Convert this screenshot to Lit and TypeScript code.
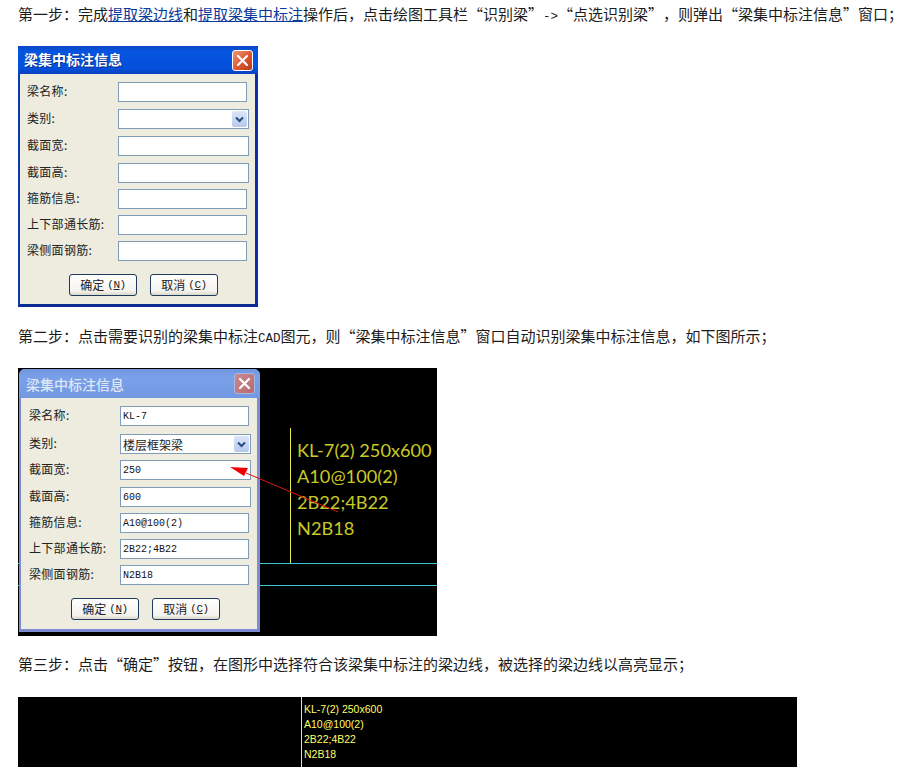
import { LitElement, html, css, svg } from "lit";
import { customElement, property } from "lit/decorators.js";

const LABELS = ["梁名称:", "类别:", "截面宽:", "截面高:", "箍筋信息:", "上下部通长筋:", "梁侧面钢筋:"];
const WIDTHS = [129, 131, 131, 131, 129, 129, 129];

@customElement("beam-dialog")
class BeamDialog extends LitElement {
  @property({ type: Array }) values: string[] = ["", "", "", "", "", "", ""];
  @property({ type: Array }) gaps: number[] = [0, 7, 7, 7, 6, 6, 6];
  @property({ type: Boolean, reflect: true }) faded = false;

  static styles = css`
    :host { display: block; width: 240px; box-sizing: border-box; background: #edecdf; border: solid #0a3ab8; border-width: 0 3px 3px 2px; border-right-color: #0a2ea8; border-bottom-color: #0a2a94; font-family: "Noto Sans CJK SC", sans-serif; color: #222; }
    :host([faded]) { width: 241px; border-color: #7c8bd2; border-radius: 6px 6px 0 0; }
    .title { height: 26px; margin: 0 -3px 0 -2px; padding: 0 5px 2px 6px; display: flex; align-items: center; justify-content: space-between; background: linear-gradient(#0a48c4, #0654e0 20%, #0450dc 80%, #0a40bc); color: #fff; font-size: 14px; font-weight: 700; text-shadow: 1px 1px 0 #0a2f8f; border-radius: 2px 2px 0 0; }
    :host([faded]) .title { height: 29px; padding-bottom: 0; background: linear-gradient(#7096dc, #7ba0ea 30%, #7398e2); border-radius: 6px 6px 0 0; text-shadow: none; color: #dfe7f7; font-weight: 500; padding-left: 7px; }
    .close { width: 21px; height: 21px; box-sizing: border-box; margin-top: 2px; border: 1px solid #fff; border-radius: 3px; background: linear-gradient(135deg, #ec9a78, #dc5530 55%, #b8391c); display: flex; align-items: center; justify-content: center; }
    :host([faded]) .close { margin-top: 0; background: linear-gradient(135deg, #c88a90, #b86a70); border-color: #a8b8e0; }
    .rows { padding: 8px 0 0 7px; }
    :host([faded]) .rows { padding-left: 8px; }
    .row { display: flex; align-items: flex-start; height: 20px; }
    .label { width: 91px; flex: none; font-size: 12px; letter-spacing: 0.3px; line-height: 18px; white-space: nowrap; }
    .field { box-sizing: border-box; height: 20px; background: #fff; border: 1px solid #7f9db9; display: flex; align-items: center; justify-content: space-between; padding: 0 1px 0 2px; font-size: 12px; overflow: hidden; white-space: nowrap; }
    .mono { font-family: "Liberation Mono", monospace; font-size: 10px; color: #111; }
    .drop { width: 15px; height: 16px; background: linear-gradient(#dbe6f8, #b6c9ec); border-radius: 2px; display: flex; align-items: center; justify-content: center; }
    .buttons { display: flex; gap: 13px; padding: 13px 0 8px 49px; }
    :host([faded]) .buttons { padding: 13px 0 9px 50px; }
    .btn { width: 68px; height: 22px; box-sizing: border-box; border: 1px solid #1f3a5f; border-radius: 3px; background: linear-gradient(#fff, #f4f3ee 80%, #dcd8c8); font-size: 12px; line-height: 18px; padding-bottom: 1px; display: flex; align-items: center; justify-content: center; gap: 3px; }
    .btn .key { font-family: "Liberation Mono", monospace; font-size: 11px; letter-spacing: -0.5px; }
  `;

  render() {
    return html`
      <div class="title">
        <span>梁集中标注信息</span>
        <span class="close">
          <svg width="13" height="13" viewBox="0 0 13 13"><path d="M2 2 L11 11 M11 2 L2 11" stroke="#fff" stroke-width="2.2" stroke-linecap="round"/></svg>
        </span>
      </div>
      <div class="rows">
        ${LABELS.map((l, i) => html`
          <div class="row" style="margin-top:${this.gaps[i]}px">
            <span class="label">${l}</span>
            <span class="field" style="width:${WIDTHS[i]}px">
              <span class=${/^[\x00-\x7f]*$/.test(this.values[i]) ? "mono" : ""}>${this.values[i]}</span>
              ${i === 1 ? html`<span class="drop"><svg width="9" height="7" viewBox="0 0 9 7"><path d="M1 1.5 L4.5 5 L8 1.5" fill="none" stroke="#2a4a86" stroke-width="2"/></svg></span>` : ""}
            </span>
          </div>`)}
      </div>
      <div class="buttons">
        <span class="btn">确定 <span class="key">(<u>N</u>)</span></span>
        <span class="btn">取消 <span class="key">(<u>C</u>)</span></span>
      </div>
    `;
  }
}

@customElement("app-root")
class AppRoot extends LitElement {
  static styles = css`
    :host { display: block; width: 914px; height: 767px; overflow: hidden; background: #fff; font-family: "Noto Sans CJK SC", sans-serif; color: #1c1c1c; }
    .page { padding: 5px 0 0 18px; }
    p { margin: 0; font-size: 15px; line-height: 17px; height: 17px; white-space: nowrap; font-weight: 400; text-spacing-trim: space-all; }
    a { color: #0a3a9c; text-decoration: underline; }
    .latin { font-family: "Liberation Mono", monospace; font-size: 12.5px; }
    .fig1 { margin: 24px 0 20px; }
    .cad { position: relative; background: #000; }
    .cad2 { width: 419px; height: 268px; margin: 24px 0 19px; padding-top: 1px; padding-left: 1px; box-sizing: border-box; }
    .cad3 { width: 779px; height: 110px; margin-top: 25px; }
    .layer { position: absolute; left: 0; top: 0; pointer-events: none; }
    .over { z-index: 2; }
    beam-dialog { position: relative; z-index: 1; }
    .cadtext { font-family: Lato, sans-serif; font-size: 18.2px; fill: #c9c926; }
    .cadsmall { font-family: "Liberation Sans", sans-serif; font-size: 10.5px; fill: #ffff66; }
  `;

  render() {
    const cadLines = ["KL-7(2) 250x600", "A10@100(2)", "2B22;4B22", "N2B18"];
    return html`
      <div class="page">
        <p>第一步：完成<a href="#">提取梁边线</a>和<a href="#">提取梁集中标注</a>操作后，点击绘图工具栏“识别梁”<span class="latin">-></span>“点选识别梁”，则弹出“梁集中标注信息”窗口；</p>
        <div class="fig1"><beam-dialog></beam-dialog></div>
        <p>第二步：点击需要识别的梁集中标注<span class="latin">CAD</span>图元，则“梁集中标注信息”窗口自动识别梁集中标注信息，如下图所示；</p>
        <div class="cad cad2">
          <svg class="layer" width="419" height="268">
            <path d="M272.5 60 V195" stroke="#e8e84a" stroke-width="1"/>
            <path d="M0 195.5 H419 M0 217.5 H419" stroke="#3cc8d0" stroke-width="1"/>
            ${cadLines.map((t, i) => svg`<text class="cadtext" x="279" y=${89 + i * 26}>${t}</text>`)}
          </svg>
          <beam-dialog faded .values=${["KL-7", "楼层框架梁", "250", "600", "A10@100(2)", "2B22;4B22", "N2B18"]} .gaps=${[0, 8, 6, 7, 6, 6, 6]}></beam-dialog>
          <svg class="layer over" width="419" height="268">
            <path d="M320 144 L228 105" stroke="#e01010" stroke-width="1"/>
            <path d="M212 99 L230 100 L226 108 Z" fill="#f00000"/>
          </svg>
        </div>
        <p>第三步：点击“确定”按钮，在图形中选择符合该梁集中标注的梁边线，被选择的梁边线以高亮显示；</p>
        <div class="cad cad3">
          <svg class="layer" width="779" height="110">
            <path d="M283.5 0 V110" stroke="#f0f060" stroke-width="1"/>
            ${cadLines.map((t, i) => svg`<text class="cadsmall" x="286" y=${16 + i * 15}>${t}</text>`)}
          </svg>
        </div>
      </div>
    `;
  }
}
